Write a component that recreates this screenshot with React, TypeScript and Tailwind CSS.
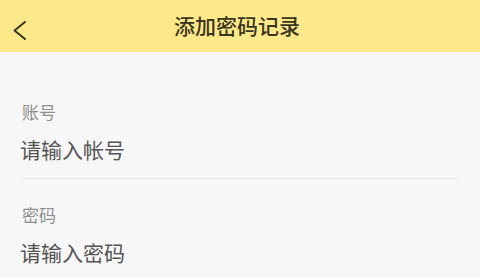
const FONT = { fontFamily: '"Noto Sans CJK SC", "Noto Sans", sans-serif' };

function Field({ label, placeholder, divider }: { label: string; placeholder: string; divider?: boolean }) {
  return (
    <div className={`mx-5 pt-[26px] ${divider ? "border-b border-[#e8e8e8] pb-[15px]" : ""}`}>
      <div className="pl-[2px] text-[17px] leading-[20px] text-[#8e8e8e]">{label}</div>
      <input
        type="text"
        placeholder={placeholder}
        className="mt-[15px] w-full bg-transparent text-[21px] leading-[24px] text-[#333] placeholder-[#555] outline-none"
        style={FONT}
      />
    </div>
  );
}

export default function App() {
  return (
    <div className="h-[277px] w-[480px] overflow-hidden bg-[#f7f7f7]" style={FONT}>
      {/* Header */}
      <div className="relative flex h-[52px] items-center justify-center bg-[#fde98a]">
        <button className="absolute left-[12px] top-[20px] text-[#3a3520]">
          <svg width="15" height="21" viewBox="0 0 15 21" fill="none">
            <path d="M13 2 L2.5 10.5 L13 19" stroke="currentColor" strokeWidth="2" strokeLinecap="round" strokeLinejoin="round" />
          </svg>
        </button>
        <h1 className="pr-[6px] text-[21px] font-medium text-[#3a3520]">添加密码记录</h1>
      </div>

      <div className="pt-[24px]">
        <Field label="账号" placeholder="请输入帐号" divider />
        <Field label="密码" placeholder="请输入密码" />
      </div>
    </div>
  );
}
